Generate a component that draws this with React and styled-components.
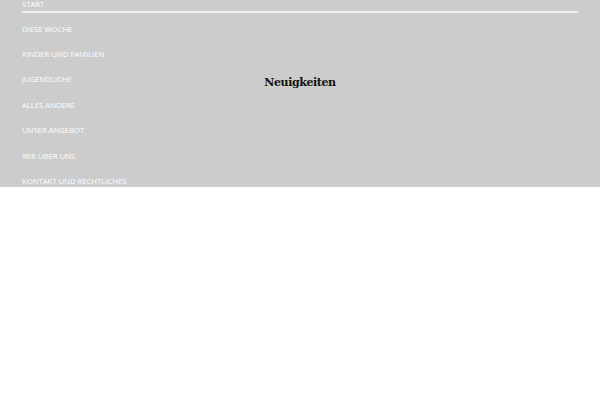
import React from 'react';
import styled, { createGlobalStyle } from 'styled-components';

const GlobalStyle = createGlobalStyle`
  html, body {
    margin: 0;
    padding: 0;
    background: #ffffff;
  }
`;

const Header = styled.header`
  display: grid;
  height: 187px;
  overflow: hidden;
  background: #cccccc;
`;

const Nav = styled.ul`
  grid-area: 1 / 1;
  list-style: none;
  margin: -2px 0 0;
  padding: 0 22px;
`;

const NavItem = styled.li`
  font-family: "Open Sans", sans-serif;
  font-size: 7.7px;
  text-transform: uppercase;
  color: #ffffff;
  line-height: 25.4px;

  &:first-child {
    line-height: 13px;
    border-bottom: 2px solid #eeeeee;
    margin-bottom: 3.6px;
  }
`;

const Title = styled.h1`
  grid-area: 1 / 1;
  align-self: start;
  justify-self: center;
  margin: 76px 0 0;
  font-family: "DejaVu Serif", serif;
  font-size: 11px;
  letter-spacing: -0.4px;
  font-weight: bold;
  color: #111111;
`;

const items = [
  'Start',
  'Diese Woche',
  'Kinder und Familien',
  'Jugendliche',
  'Alles andere',
  'Unser Angebot',
  'Wir über uns',
  'Kontakt und Rechtliches',
];

export default function App() {
  return (
    <>
      <GlobalStyle />
      <Header>
        <Nav>
          {items.map((item, i) => (
            <NavItem key={i}>{item}</NavItem>
          ))}
        </Nav>
        <Title>Neuigkeiten</Title>
      </Header>
    </>
  );
}
